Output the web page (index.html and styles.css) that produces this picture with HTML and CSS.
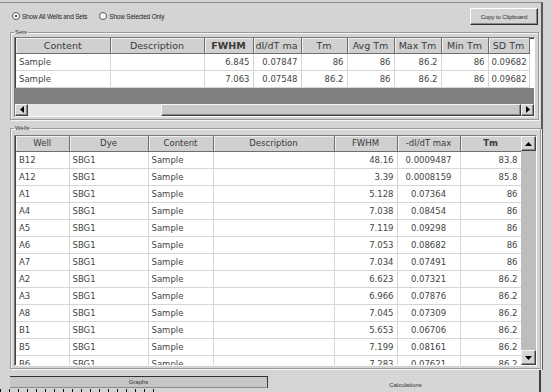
FILE: index.html
```html
<!DOCTYPE html>
<html>
<head>
<meta charset="utf-8">
<link rel="stylesheet" href="styles.css">
</head>
<body>
<div class="panel">
  <div class="toprow">
    <div class="radios">
      <label class="radio"><span class="dot on"></span>Show All Wells and Sets</label>
      <label class="radio"><span class="dot"></span>Show Selected Only</label>
    </div>
    <div class="btn">Copy to Clipboard</div>
  </div>

  <fieldset class="group sets">
    <legend>Sets</legend>
    <div class="grid sets-grid">
      <table class="tbl">
        <colgroup>
          <col style="width:94px"><col style="width:94px"><col style="width:49px"><col style="width:48px"><col style="width:46px"><col style="width:47px"><col style="width:47px"><col style="width:47px"><col style="width:41px">
        </colgroup>
        <thead>
          <tr class="big">
            <th>Content</th><th>Description</th><th class="b">FWHM</th><th class="l">dI/dT ma</th><th>Tm</th><th>Avg Tm</th><th>Max Tm</th><th>Min Tm</th><th>SD Tm</th>
          </tr>
        </thead>
        <tbody>
          <tr><td>Sample</td><td></td><td class="r">6.845</td><td class="r">0.07847</td><td class="r">86</td><td class="r">86</td><td class="r">86.2</td><td class="r">86</td><td class="r">0.09682</td></tr>
          <tr><td>Sample</td><td></td><td class="r">7.063</td><td class="r">0.07548</td><td class="r">86.2</td><td class="r">86</td><td class="r">86.2</td><td class="r">86</td><td class="r">0.09682</td></tr>
        </tbody>
      </table>
      <div class="fill"></div>
      <div class="hscroll">
        <div class="sbtn"><svg width="4" height="7" viewBox="0 0 4 7"><path d="M4 0 L0 3.5 L4 7 Z" fill="#000"/></svg></div>
        <div class="htrack"></div>
        <div class="hthumb"></div>
        <div class="sbtn"><svg width="4" height="7" viewBox="0 0 4 7"><path d="M0 0 L4 3.5 L0 7 Z" fill="#000"/></svg></div>
      </div>
    </div>
  </fieldset>

  <fieldset class="group wells">
    <legend>Wells</legend>
    <div class="grid wells-grid">
      <div class="wells-body">
        <table class="tbl">
          <colgroup>
            <col style="width:53px"><col style="width:79px"><col style="width:65px"><col style="width:121px"><col style="width:63px"><col style="width:63px"><col style="width:61px">
          </colgroup>
          <thead>
            <tr><th>Well</th><th>Dye</th><th>Content</th><th>Description</th><th>FWHM</th><th>-dI/dT max</th><th class="b">Tm</th></tr>
          </thead>
          <tbody>
            <tr><td>B12</td><td>SBG1</td><td>Sample</td><td></td><td class="r">48.16</td><td class="c">0.0009487</td><td class="r">83.8</td></tr>
            <tr><td>A12</td><td>SBG1</td><td>Sample</td><td></td><td class="r">3.39</td><td class="c">0.0008159</td><td class="r">85.8</td></tr>
            <tr><td>A1</td><td>SBG1</td><td>Sample</td><td></td><td class="r">5.128</td><td class="c">0.07364</td><td class="r">86</td></tr>
            <tr><td>A4</td><td>SBG1</td><td>Sample</td><td></td><td class="r">7.038</td><td class="c">0.08454</td><td class="r">86</td></tr>
            <tr><td>A5</td><td>SBG1</td><td>Sample</td><td></td><td class="r">7.119</td><td class="c">0.09298</td><td class="r">86</td></tr>
            <tr><td>A6</td><td>SBG1</td><td>Sample</td><td></td><td class="r">7.053</td><td class="c">0.08682</td><td class="r">86</td></tr>
            <tr><td>A7</td><td>SBG1</td><td>Sample</td><td></td><td class="r">7.034</td><td class="c">0.07491</td><td class="r">86</td></tr>
            <tr><td>A2</td><td>SBG1</td><td>Sample</td><td></td><td class="r">6.623</td><td class="c">0.07321</td><td class="r">86.2</td></tr>
            <tr><td>A3</td><td>SBG1</td><td>Sample</td><td></td><td class="r">6.966</td><td class="c">0.07876</td><td class="r">86.2</td></tr>
            <tr><td>A8</td><td>SBG1</td><td>Sample</td><td></td><td class="r">7.045</td><td class="c">0.07309</td><td class="r">86.2</td></tr>
            <tr><td>B1</td><td>SBG1</td><td>Sample</td><td></td><td class="r">5.653</td><td class="c">0.06706</td><td class="r">86.2</td></tr>
            <tr><td>B5</td><td>SBG1</td><td>Sample</td><td></td><td class="r">7.199</td><td class="c">0.08161</td><td class="r">86.2</td></tr>
            <tr><td>B6</td><td>SBG1</td><td>Sample</td><td></td><td class="r">7.283</td><td class="c">0.07621</td><td class="r">86.2</td></tr>
          </tbody>
        </table>
      </div>
      <div class="vscroll">
        <div class="sbtn v"><svg width="7" height="4" viewBox="0 0 7 4"><path d="M0 4 L3.5 0 L7 4 Z" fill="#000"/></svg></div>
        <div class="vtrack"></div>
        <div class="sbtn v"><svg width="7" height="4" viewBox="0 0 7 4"><path d="M0 0 L3.5 4 L7 0 Z" fill="#000"/></svg></div>
      </div>
    </div>
  </fieldset>
</div>
<div class="tabs">
  <div class="tab graphs">Graphs</div>
  <div class="tab calc">Calculations</div>
</div>
<div class="marks"></div>
</body>
</html>
```

FILE: styles.css
```css
* { box-sizing: border-box; }
html, body { margin: 0; padding: 0; }
body {
  width: 552px;
  height: 392px;
  overflow: hidden;
  background: #d4d4d4;
  font-family: "Liberation Sans", Arial, sans-serif;
  color: #2a2a2a;
}
.panel {
  width: 543px;
  height: 368px;
  border-top: 1px solid #8c8c8c;
  border-right: 2px solid #5a5a5a;
  margin-top: 2px;
  background: #d4d4d4;
}
.toprow {
  height: 25px;
  display: flex;
  align-items: flex-start;
  justify-content: space-between;
  padding: 5px 3px 0 12px;
}
.radios {
  display: flex;
  gap: 12px;
  padding-top: 4px;
}
.radio {
  display: flex;
  align-items: center;
  gap: 2px;
  font-size: 6.4px;
  letter-spacing: -0.15px;
  color: #222;
}
.dot {
  width: 8px;
  height: 8px;
  border-radius: 50%;
  border: 1px solid #555;
  background: #fff;
  position: relative;
  display: inline-block;
}
.dot.on::after {
  content: "";
  position: absolute;
  left: 2px;
  top: 2px;
  width: 2px;
  height: 2px;
  border-radius: 50%;
  background: #000;
}
.btn {
  width: 68px;
  height: 17px;
  background: #d4d4d4;
  border: 1px solid;
  border-color: #fff #303030 #303030 #fff;
  box-shadow: inset -1px -1px #888;
  font-size: 6px;
  display: flex;
  align-items: center;
  justify-content: center;
  letter-spacing: -0.1px;
}
.group {
  margin: 0 0 0 10px;
  width: 529px;
  border: 1px solid #9a9a9a;
  box-shadow: inset 1px 1px #f4f4f4, 1px 1px #f4f4f4;
  padding: 1px 3px 2px 3px;
}
.group legend {
  font-size: 6px;
  line-height: 8px;
  height: 8px;
  padding: 0 1px;
  margin-left: 0;
  color: #333;
}
.wells { margin-top: 4px; padding-top: 3px; }
.grid {
  border: 1px solid;
  border-color: #7a7a7a #fafafa #fafafa #7a7a7a;
  box-shadow: inset 1px 1px #404040;
  background: #fff;
  overflow: hidden;
}
.sets-grid { height: 80px; display: flex; flex-direction: column; }
.tbl {
  border-collapse: collapse;
  table-layout: fixed;
  margin-left: 1px;
  font-family: "DejaVu Sans", "Liberation Sans", sans-serif;
}
.sets .tbl { width: 513px; }
.tbl th {
  height: 15px;
  background: #d0d0d0;
  font-weight: normal;
  font-size: 8.5px;
  color: #3a3a3a;
  border-right: 1px solid #6e6e6e;
  border-bottom: 1px solid #6e6e6e;
  box-shadow: inset 1px 1px #f0f0f0;
  padding: 0 2px;
  text-align: center;
  white-space: nowrap;
  overflow: hidden;
}
.tbl tr.big th { font-size: 9.5px; }
.tbl th.b { font-weight: bold; }
.tbl th.l { text-align: left; }
.tbl td {
  height: 17px;
  font-size: 8.5px;
  border-right: 1px solid #d6d6d6;
  border-bottom: 1px solid #d6d6d6;
  padding: 0 3px;
  white-space: nowrap;
  overflow: hidden;
  color: #444;
}
.tbl td.r { text-align: right; }
.tbl td.c { text-align: center; }
.fill { height: 16px; background: #808080; }
.hscroll {
  flex: 1;
  display: flex;
  background: #e6e6e6;
}
.sbtn {
  width: 13px;
  background: #d4d4d4;
  border: 1px solid;
  border-color: #f4f4f4 #404040 #404040 #f4f4f4;
  box-shadow: inset -1px -1px #888;
  display: flex;
  align-items: center;
  justify-content: center;
}
.htrack { width: 133px; background: #e6e6e6; }
.hthumb {
  flex: 1;
  background: #c8c8c8;
  border: 1px solid;
  border-color: #f4f4f4 #404040 #404040 #f4f4f4;
  box-shadow: inset -1px -1px #888;
}
.wells-grid { height: 231px; display: flex; }
.wells-body { width: 506px; overflow: hidden; }
.wells .tbl { width: 505px; }
.vscroll {
  width: 15px;
  display: flex;
  flex-direction: column;
  background: #d4d4d4;
}
.sbtn.v { width: 15px; height: 15px; }
.vtrack { flex: 1; background: #bdbdbd; }
.tabs {
  display: flex;
  height: 20px;
}
.tab {
  font-size: 6px;
  color: #333;
  display: flex;
  justify-content: center;
  align-items: center;
}
.graphs {
  margin-left: 10px;
  margin-top: 6px;
  width: 258px;
  height: 12px;
  background: #c6c6c6;
  border-top: 1px solid #303030;
  border-right: 1px solid #303030;
  border-bottom: 1px solid #8a8a8a;
}
.calc {
  margin-left: 4px;
  width: 269px;
  height: 24px;
  padding-top: 5px;
  background: #d6d6d6;
  border-right: 2px solid #404040;
}
.marks {
  width: 160px;
  height: 5px;
  margin-top: -1px;
  background: repeating-linear-gradient(90deg, #111 0 1px, transparent 1px 9px);
}
```
